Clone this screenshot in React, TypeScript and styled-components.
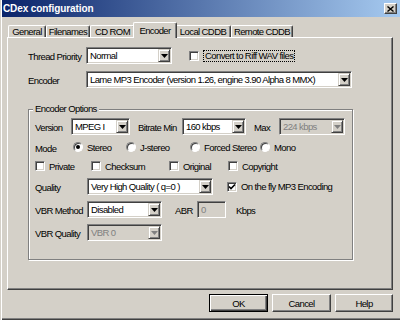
import styled, { createGlobalStyle } from 'styled-components';

const face = '#d4d0c8';
const shadow = '#808080';
const dark = '#404040';

const GlobalStyle = createGlobalStyle`
  body {
    margin: 0;
    background: ${face};
    font-family: 'Liberation Sans', Arial, sans-serif;
    font-size: 9.5px;
    letter-spacing: -0.6px;
    color: #000;
  }
`;

interface ComboProps {
  value: string;
  width: number;
  disabled?: boolean;
}

const Combo = ({ value, width, disabled }: ComboProps) => (
  <ComboBox $width={width} $disabled={disabled}>
    <ComboText>{value}</ComboText>
    <DropButton>
      <svg width='7' height='4' viewBox='0 0 7 4'>
        <polygon points='0,0 7,0 3.5,4' fill={disabled ? shadow : '#000'} />
      </svg>
    </DropButton>
  </ComboBox>
);

const Check = ({ checked }: { checked?: boolean }) => (
  <CheckBox>
    {checked && (
      <svg width='8' height='8' viewBox='0 0 8 8'>
        <path d='M1 3.5 L3 5.5 L7 1.5' stroke='#000' strokeWidth='1.6' fill='none' />
      </svg>
    )}
  </CheckBox>
);

const App = () => {
  return (
    <>
      <GlobalStyle />
      <Window>
        <TitleBar>
          <Title>CDex configuration</Title>
          <CloseButton>
            <svg width='7' height='6' viewBox='0 0 7 6'>
              <path d='M0.5 0.5 L6.5 5.5 M6.5 0.5 L0.5 5.5' stroke='#000' strokeWidth='1.4' />
            </svg>
          </CloseButton>
        </TitleBar>
        <Body>
          <TabStrip>
            <Tab $width={38}>General</Tab>
            <Tab $width={44}>Filenames</Tab>
            <Tab $width={45}>CD ROM</Tab>
            <Tab $width={44} $active>
              Encoder
            </Tab>
            <Tab $width={56}>Local CDDB</Tab>
            <Tab $width={62}>Remote CDDB</Tab>
          </TabStrip>
          <Panel>
            <Row>
              <Label $width={58}>Thread Priority</Label>
              <Combo value='Normal' width={86} />
              <CheckItem $gap={17}>
                <Check />
                <FocusText>Convert to Riff WAV files</FocusText>
              </CheckItem>
            </Row>
            <Row $top={7}>
              <Label $width={58}>Encoder</Label>
              <Combo value='Lame MP3 Encoder (version 1.26, engine 3.90 Alpha 8 MMX)' width={266} />
            </Row>
            <GroupBox>
              <GroupCaption>Encoder Options</GroupCaption>
              <Row>
                <Label $width={36}>Version</Label>
                <Combo value='MPEG I' width={59} />
                <Label $width={44} $gap={8}>
                  Bitrate Min
                </Label>
                <Combo value='160 kbps' width={64} />
                <Label $width={25} $gap={8}>
                  Max
                </Label>
                <Combo value='224 kbps' width={66} disabled />
              </Row>
              <Row $top={6} $height={12}>
                <Label $width={38}>Mode</Label>
                <OptionItem $width={53}>
                  <Radio $checked />
                  <span>Stereo</span>
                </OptionItem>
                <OptionItem $width={64}>
                  <Radio />
                  <span>J-stereo</span>
                </OptionItem>
                <OptionItem $width={70}>
                  <Radio />
                  <span>Forced Stereo</span>
                </OptionItem>
                <OptionItem>
                  <Radio />
                  <span>Mono</span>
                </OptionItem>
              </Row>
              <Row $top={7} $height={12}>
                <OptionItem $width={56}>
                  <Check />
                  <span>Private</span>
                </OptionItem>
                <OptionItem $width={78}>
                  <Check />
                  <span>Checksum</span>
                </OptionItem>
                <OptionItem $width={59}>
                  <Check />
                  <span>Original</span>
                </OptionItem>
                <OptionItem>
                  <Check />
                  <span>Copyright</span>
                </OptionItem>
              </Row>
              <Row $top={6}>
                <Label $width={52}>Quality</Label>
                <Combo value='Very High Quality ( q=0 )' width={126} />
                <CheckItem $gap={14}>
                  <Check checked />
                  <span>On the fly MP3 Encoding</span>
                </CheckItem>
              </Row>
              <Row $top={6}>
                <Label $width={52}>VBR Method</Label>
                <Combo value='Disabled' width={75} />
                <Label $width={22} $gap={13}>
                  ABR
                </Label>
                <TextField $width={29}>0</TextField>
                <Label $gap={10}>Kbps</Label>
              </Row>
              <Row $top={6}>
                <Label $width={52}>VBR Quality</Label>
                <Combo value='VBR 0' width={75} disabled />
              </Row>
            </GroupBox>
          </Panel>
          <ButtonRow>
            <DialogButton $primary>OK</DialogButton>
            <DialogButton>Cancel</DialogButton>
            <DialogButton $width={58}>Help</DialogButton>
          </ButtonRow>
        </Body>
      </Window>
    </>
  );
};

const Window = styled.div`
  width: 400px;
  height: 320px;
  box-sizing: border-box;
  padding-left: 2px;
  display: flex;
  flex-direction: column;
  background: ${face};
  box-shadow: inset 1px 0 ${face}, inset 2px 0 #fff, inset 0 -1px ${dark}, inset 0 -2px ${shadow};
`;

const TitleBar = styled.div`
  height: 17px;
  display: flex;
  align-items: center;
  padding: 0 3px 0 1px;
  background: linear-gradient(to right, #0a246a, #a6caf0);
`;

const Title = styled.span`
  color: #fff;
  font-weight: bold;
  font-size: 10px;
  letter-spacing: -0.1px;
`;

const CloseButton = styled.div`
  margin-left: auto;
  width: 13px;
  height: 11px;
  box-sizing: border-box;
  display: flex;
  align-items: center;
  justify-content: center;
  background: ${face};
  border: 1px solid;
  border-color: #fff ${dark} ${dark} #fff;
  box-shadow: inset -1px -1px ${shadow};
`;

const Body = styled.div`
  display: flex;
  flex-direction: column;
  padding: 5px 7px 0 5px;
`;

const TabStrip = styled.div`
  display: flex;
  align-items: flex-end;
  height: 15px;
  padding-left: 1px;
`;

const Tab = styled.div<{ $width: number; $active?: boolean }>`
  position: relative;
  z-index: ${p => (p.$active ? 1 : 0)};
  box-sizing: border-box;
  width: ${p => p.$width}px;
  height: ${p => (p.$active ? 16 : 12)}px;
  margin: ${p => (p.$active ? '0 -2px -1px' : '0')};
  padding-top: ${p => (p.$active ? 2 : 0)}px;
  line-height: 11px;
  text-align: center;
  background: ${face};
  border-top: 1px solid #fff;
  border-left: 1px solid #fff;
  border-right: 1px solid ${dark};
  border-radius: 2px 2px 0 0;
  box-shadow: inset -1px 0 ${shadow};
  white-space: nowrap;
`;

const Panel = styled.div`
  box-sizing: border-box;
  width: 386px;
  height: 253px;
  display: flex;
  flex-direction: column;
  padding: 9px 0 0 20px;
  border: 1px solid;
  border-color: #fff ${dark} ${dark} #fff;
  box-shadow: inset -1px -1px ${shadow};
`;

const Row = styled.div<{ $top?: number; $height?: number }>`
  display: flex;
  align-items: center;
  height: ${p => p.$height ?? 17}px;
  margin-top: ${p => p.$top ?? 0}px;
  white-space: nowrap;
`;

const Label = styled.span<{ $width?: number; $gap?: number }>`
  flex: none;
  width: ${p => (p.$width ? `${p.$width}px` : 'auto')};
  margin-left: ${p => p.$gap ?? 0}px;
  padding-top: 2px;
`;

const ComboBox = styled.div<{ $width: number; $disabled?: boolean }>`
  flex: none;
  box-sizing: border-box;
  width: ${p => p.$width}px;
  height: 17px;
  display: flex;
  padding: 1px;
  background: ${p => (p.$disabled ? face : '#fff')};
  color: ${p => (p.$disabled ? shadow : '#000')};
  border: 1px solid;
  border-color: ${shadow} #fff #fff ${shadow};
  box-shadow: inset 1px 1px ${dark}, inset -1px -1px ${face};
`;

const ComboText = styled.span`
  flex: 1;
  padding-left: 2px;
  line-height: 13px;
  overflow: hidden;
`;

const DropButton = styled.div`
  flex: none;
  box-sizing: border-box;
  width: 12px;
  display: flex;
  align-items: center;
  justify-content: center;
  background: ${face};
  border: 1px solid;
  border-color: ${face} ${dark} ${dark} ${face};
  box-shadow: inset 1px 1px #fff, inset -1px -1px ${shadow};
`;

const TextField = styled.div<{ $width: number }>`
  flex: none;
  box-sizing: border-box;
  width: ${p => p.$width}px;
  height: 17px;
  padding-left: 3px;
  line-height: 15px;
  color: ${shadow};
  background: ${face};
  border: 1px solid;
  border-color: ${shadow} #fff #fff ${shadow};
  box-shadow: inset 1px 1px ${dark}, inset -1px -1px ${face};
`;

const CheckItem = styled.div<{ $gap: number }>`
  display: flex;
  align-items: center;
  gap: 3px;
  margin-left: ${p => p.$gap}px;

  span {
    margin-left: 1px;
  }
`;

const OptionItem = styled.div<{ $width?: number }>`
  flex: none;
  display: flex;
  align-items: center;
  gap: 4px;
  width: ${p => (p.$width ? `${p.$width}px` : 'auto')};
`;

const CheckBox = styled.div`
  flex: none;
  box-sizing: border-box;
  width: 10px;
  height: 10px;
  display: flex;
  align-items: center;
  justify-content: center;
  background: #fff;
  border: 1px solid;
  border-color: ${shadow} #fff #fff ${shadow};
  box-shadow: inset 1px 1px ${dark}, inset -1px -1px ${face};
`;

const Radio = styled.div<{ $checked?: boolean }>`
  flex: none;
  box-sizing: border-box;
  width: 10px;
  height: 10px;
  border-radius: 50%;
  display: flex;
  align-items: center;
  justify-content: center;
  background: #fff;
  border: 1px solid;
  border-color: ${shadow} #fff #fff ${shadow};
  box-shadow: inset 1px 1px ${dark};

  &::after {
    content: '';
    display: ${p => (p.$checked ? 'block' : 'none')};
    width: 4px;
    height: 4px;
    border-radius: 50%;
    background: #000;
  }
`;

const FocusText = styled.span`
  padding: 0 1px;
  border: 1px dotted #000;
  line-height: 10px;
`;

const GroupBox = styled.div`
  position: relative;
  box-sizing: border-box;
  width: 325px;
  height: 151px;
  margin-top: 21px;
  padding: 8px 0 0 6px;
  border: 1px solid ${shadow};
  box-shadow: inset 1px 1px #fff, 1px 1px #fff;
`;

const GroupCaption = styled.span`
  position: absolute;
  top: -7px;
  left: 4px;
  padding: 0 2px;
  background: ${face};
`;

const ButtonRow = styled.div`
  display: flex;
  justify-content: flex-end;
  gap: 4px;
  margin-top: 4px;
`;

const DialogButton = styled.div<{ $primary?: boolean; $width?: number }>`
  box-sizing: border-box;
  width: ${p => p.$width ?? 59}px;
  height: 18px;
  display: flex;
  align-items: center;
  justify-content: center;
  background: ${face};
  border: 1px solid;
  border-color: ${p => (p.$primary ? '#000' : `#fff ${dark} ${dark} #fff`)};
  box-shadow: ${p =>
    p.$primary
      ? `inset 1px 1px #fff, inset -1px -1px ${dark}, inset -2px -2px ${shadow}`
      : `inset -1px -1px ${shadow}`};
`;

export default App;
